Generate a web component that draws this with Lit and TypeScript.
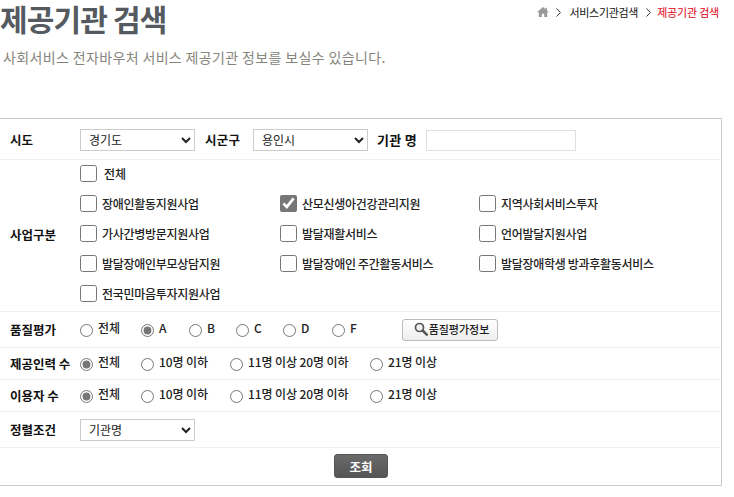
import { LitElement, html, css } from "lit";
import { customElement } from "lit/decorators.js";

const biz = [
  ["장애인활동지원사업", false],
  ["산모신생아건강관리지원", true],
  ["지역사회서비스투자", false],
  ["가사간병방문지원사업", false],
  ["발달재활서비스", false],
  ["언어발달지원사업", false],
  ["발달장애인부모상담지원", false],
  ["발달장애인 주간활동서비스", false],
  ["발달장애학생 방과후활동서비스", false],
  ["전국민마음투자지원사업", false],
] as const;

@customElement("app-root")
export class AppRoot extends LitElement {
  static styles = css`
    :host { display: block; width: 734px; height: 497px; overflow: hidden; background: #fff;
      font-family: "Noto Sans CJK KR", "Noto Sans", sans-serif; font-size: 12px; color: #222; }
    * { box-sizing: border-box; }
    .head { display: flex; justify-content: space-between; align-items: flex-start; padding-right: 15px; height: 44px; }
    h1 { margin: 0; font-size: 30px; font-weight: 700; color: #555a60; line-height: 36px; letter-spacing: -0.85px; }
    .crumb { display: flex; align-items: center; font-size: 11px; line-height: 14px; padding-top: 5px; color: #111; letter-spacing: -0.3px; }
    .crumb svg { display: block; }
    .m7 { margin-left: 7px; }
    .m8 { margin-left: 8px; }
    .m6 { margin-left: 6px; }
    .crumb .now { color: #e00012; letter-spacing: -0.2px; }
    .sub { margin: 0; padding-left: 3px; height: 74px; font-size: 14px; line-height: 26px; color: #85857c; letter-spacing: 0.36px; }
    .box { width: 722px; height: 368px; border-top: 1px solid #ccc; border-bottom: 1px solid #ccc; border-right: 1px solid #ccc; }
    .row { display: flex; align-items: center; border-bottom: 1px solid #f0f0f0; padding-left: 10px; }
    .r1 { height: 41px; padding-top: 2px; }
    .r2 { height: 152px; padding-bottom: 1px; }
    .r3 { height: 36px; }
    .r4 { height: 32px; }
    .r5 { height: 36px; }
    .label { width: 70px; flex: none; font-weight: 700; font-size: 12.5px; color: #111; white-space: nowrap; padding-bottom: 1px; }
    .narrow { font-weight: 700; font-size: 12.5px; color: #111; white-space: nowrap; padding-bottom: 1px; }
    .sgg { width: 48px; margin-left: 10px; letter-spacing: 0.2px; }
    .org { width: 49px; margin-left: 9px; font-size: 13px; letter-spacing: 0.3px; }
    select { width: 115px; height: 22px; border: 1px solid #ccc; background: #fff; font: inherit; font-size: 12px; padding: 0 4px 2px; color: #222; outline: none; flex: none; }
    .text { width: 150px; height: 21px; border: 1px solid #e0e0e0; flex: none; }
    .biz { display: flex; flex-direction: column; flex: 1; align-self: flex-start; }
    .all { display: flex; align-items: center; height: 27px; margin-bottom: 1px; font-weight: 500; }
    .all span { margin-left: 7px; }
    .grid { display: grid; grid-template-columns: 200px 199px 1fr; grid-auto-rows: 30px; }
    .item { display: flex; align-items: center; gap: 5px; white-space: nowrap; color: #222; font-weight: 500; letter-spacing: -0.3px; }
    input[type="checkbox"], input[type="radio"] { accent-color: #767676; }
    input[type="checkbox"] { width: 17px; height: 17px; margin: 0; flex: none; }
    .radios { display: flex; align-items: center; flex: 1; }
    .radio { display: flex; align-items: center; gap: 5px; white-space: nowrap; font-weight: 500; letter-spacing: -0.1px; }
    .radio input { margin: 1px 0 0; width: 13px; height: 13px; flex: none; }
    .radio span { position: relative; top: -2px; }
    .qbtn { display: flex; align-items: center; justify-content: center; gap: 0; width: 96px; height: 22px; margin-left: 46px; padding: 0 0 1px 3px;
      border: 1px solid #bbb; border-radius: 3px; background: linear-gradient(#fff, #eee); font: inherit; font-size: 11px; font-weight: 500; color: #222; }
    .foot { display: flex; justify-content: center; padding: 6px 0 0 1px; }
    .go { width: 54px; height: 24px; border: 1px solid #555; border-radius: 3px; background: linear-gradient(#6a6a6a, #555); color: #fff; font: inherit; font-size: 12.5px; font-weight: 700; padding: 0; }
  `;

  private radioSet(name: string, items: [string, number][], checked: number) {
    return items.map(([t, w], i) => html`<label class="radio" style="width:${w}px"><input type="radio" name=${name} ?checked=${i === checked} /><span>${t}</span></label>`);
  }

  render() {
    const count: [string, number][] = [["전체", 61], ["10명 이하", 89], ["11명 이상 20명 이하", 140], ["21명 이상", 80]];
    const grade: [string, number][] = [["전체", 61], ["A", 48], ["B", 47], ["C", 47], ["D", 49], ["F", 24]];
    const chev = (cls: string) => html`<svg class=${cls} width="5" height="9" viewBox="0 0 5 9"><path fill="none" stroke="#333" d="M.5.5 4.4 4.5.5 8.5"/></svg>`;
    return html`
      <div class="head">
        <h1>제공기관 검색</h1>
        <div class="crumb">
          <svg width="12" height="10" viewBox="0 0 12 10"><path fill="#999" d="M6 0 0 5.2h1.8V10h3V6.8h2.4V10h3V5.2H12L10 3.4V.8H8.6v1.4z"/></svg>
          ${chev("m7")}
          <span class="m8">서비스기관검색</span>
          ${chev("m8")}
          <span class="now m6">제공기관 검색</span>
        </div>
      </div>
      <p class="sub">사회서비스 전자바우처 서비스 제공기관 정보를 보실수 있습니다.</p>
      <div class="box">
        <div class="row r1">
          <div class="label">시도</div>
          <select><option>경기도</option></select>
          <div class="narrow sgg">시군구</div>
          <select><option>용인시</option></select>
          <div class="narrow org">기관 명</div>
          <input class="text" type="text" />
        </div>
        <div class="row r2">
          <div class="label">사업구분</div>
          <div class="biz">
            <label class="all"><input type="checkbox" /><span>전체</span></label>
            <div class="grid">
              ${biz.map(([t, c]) => html`<label class="item"><input type="checkbox" ?checked=${c} />${t}</label>`)}
            </div>
          </div>
        </div>
        <div class="row r3">
          <div class="label">품질평가</div>
          <div class="radios">
            ${this.radioSet("g", grade, 1)}
            <button class="qbtn">
              <svg width="15" height="14" viewBox="0 0 15 14"><circle cx="5.5" cy="5.5" r="4" fill="#eef2f5" stroke="#555" stroke-width="1.7"/><path stroke="#555" stroke-width="2.6" stroke-linecap="round" d="M8.8 8.8 12.8 12.6"/></svg>품질평가정보
            </button>
          </div>
        </div>
        <div class="row r4">
          <div class="label">제공인력 수</div>
          <div class="radios">${this.radioSet("s", count, 0)}</div>
        </div>
        <div class="row r4">
          <div class="label">이용자 수</div>
          <div class="radios">${this.radioSet("u", count, 0)}</div>
        </div>
        <div class="row r5">
          <div class="label">정렬조건</div>
          <select><option>기관명</option></select>
        </div>
        <div class="foot"><button class="go">조회</button></div>
      </div>
    `;
  }
}
